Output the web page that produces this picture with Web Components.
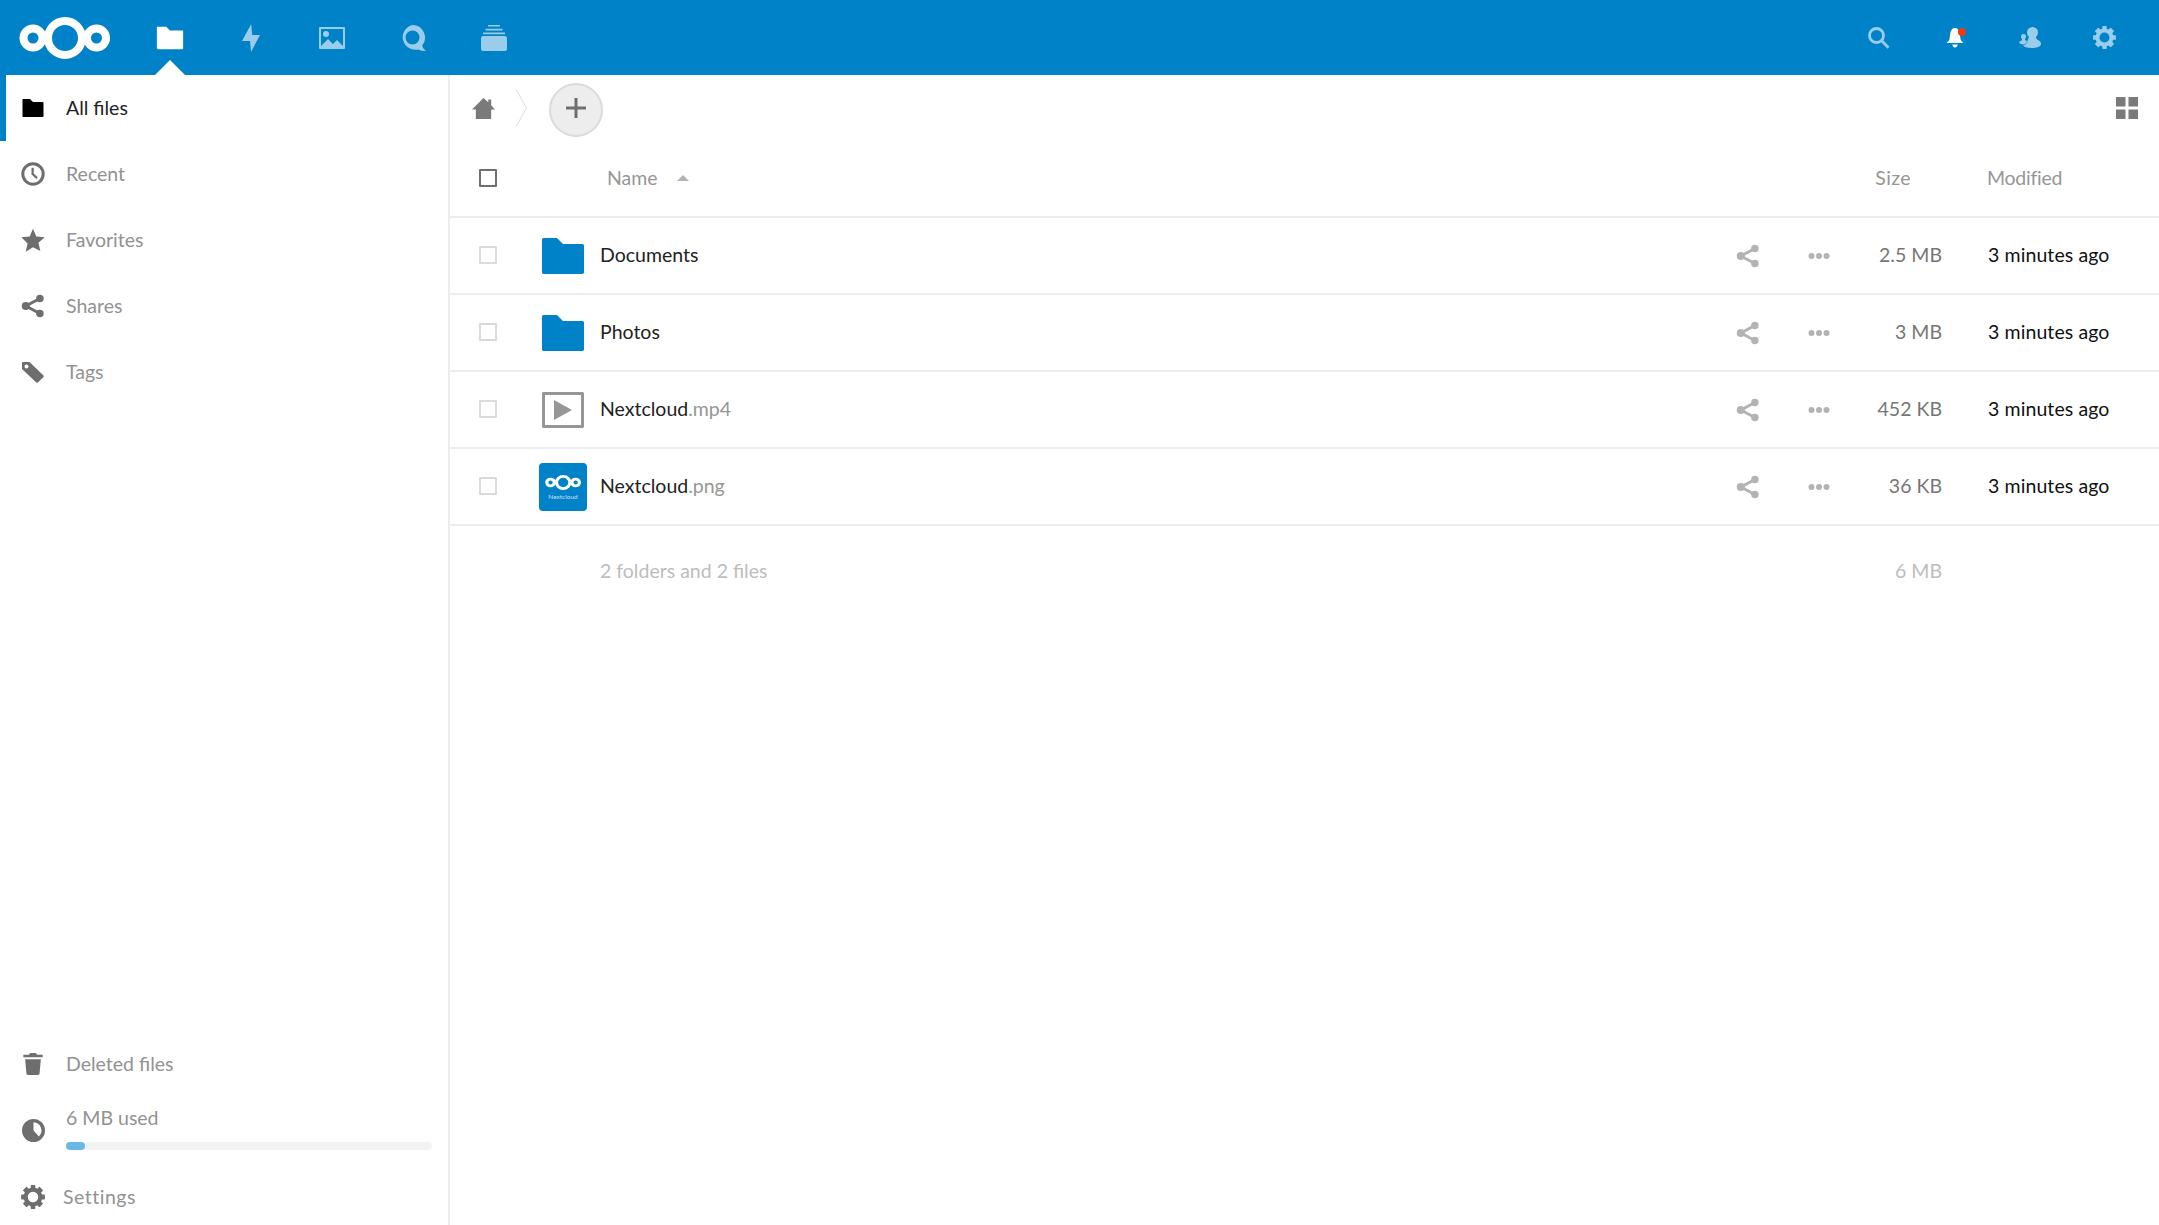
<!DOCTYPE html>
<html lang="en">
<head>
<meta charset="utf-8">
<title>Files - Nextcloud</title>
<style>
  html, body { margin: 0; height: 100%; overflow: hidden; background: #fff; }
  body { font: 19.5px/1.3 Lato, "Open Sans", sans-serif; color: #222; }
</style>
</head>
<body>
<nc-app></nc-app>

<script>
// Icons keyed by name: [viewBox, markup]. Everything paints with currentColor.
const GEAR = 'M6.94 0a.43.43 0 0 0-.44.44v1.4c-.5.16-.98.38-1.4.63L4.03 1.4a.43.43 0 0 0-.62 0L1.5 3.28a.43.43 0 0 0 0 .63l1.06 1.06c-.25.43-.46.9-.62 1.4H.5a.43.43 0 0 0-.44.44v2.38c0 .24.2.43.44.43h1.44c.16.5.37.98.62 1.41L1.5 12.1a.43.43 0 0 0 0 .62l1.9 1.88c.18.17.46.17.63 0l1.07-1.07c.42.25.9.47 1.4.63v1.4c0 .25.2.44.44.44h2.12a.43.43 0 0 0 .44-.44v-1.4c.5-.16.98-.38 1.4-.63l1.07 1.07c.17.17.45.17.62 0l1.88-1.88a.43.43 0 0 0 0-.62l-1.06-1.07c.25-.43.46-.9.62-1.4h1.47a.43.43 0 0 0 .44-.44V6.81a.43.43 0 0 0-.44-.44h-1.47a7 7 0 0 0-.62-1.4l1.06-1.06a.43.43 0 0 0 0-.63L12.6 1.4a.43.43 0 0 0-.63 0L10.9 2.47a7 7 0 0 0-1.4-.63V.44A.43.43 0 0 0 9.06 0zM8 4.5a3.5 3.5 0 1 1 0 7 3.5 3.5 0 0 1 0-7z'
const SHARE = '<circle cx="3.2" cy="8" r="2.7"/><circle cx="12.6" cy="3" r="2.5"/><circle cx="12.6" cy="13" r="2.5"/><path d="M3.2 8l9.4-5M3.2 8l9.4 5" fill="none" stroke="currentColor" stroke-width="2"/>'
const ICONS = {
  folder: ['0 0 16 16', '<path d="M1.5 2c-.25 0-.5.25-.5.5v11c0 .26.24.5.5.5h13c.26 0 .5-.24.5-.5v-9c0-.25-.25-.5-.5-.5H8L6 2z"/>'],
  bolt: ['0 0 18 28', '<path d="M9.2 0L0 17h8l1 11 9-17h-7.800z"/>'],
  image: ['0 0 26 22', '<path fill-rule="evenodd" d="M1 0h24a1 1 0 0 1 1 1v20a1 1 0 0 1-1 1H1a1 1 0 0 1-1-1V1a1 1 0 0 1 1-1zm1 2v17l7-7 5 5 4-4 6 6V2z"/><circle cx="7" cy="7" r="3"/>'],
  talk: ['0 0 26 26', '<path fill-rule="evenodd" d="M12.500 0a12.500 12.500 0 0 1 9.700 20.400c.5 2 1.700 3.800 3.800 5.600-2.700 0-5.500-.5-8-1.600A12.500 12.500 0 1 1 12.500 0zm0 5.500a7 7 0 1 0 0 14 7 7 0 0 0 0-14z"/>'],
  deck: ['0 0 26 26', '<path d="M7 0h12v1.500H7zM4.500 3.800h17v1.700h-17zM2 7.500h22V9.300H2z"/><rect y="11" width="26" height="15" rx="2"/>'],
  search: ['0 0 22 22', '<path fill="none" stroke="currentColor" stroke-width="2.800" d="M8.500 1.500a7 7 0 1 0 0 14 7 7 0 0 0 0-14zM13.500 13.500l7 7.200"/>'],
  bell: ['0 0 16 20', '<path d="M8 0C5.500 0 3.700 2 3.300 5l-.8 6C2.300 12.500 1 13.500 0 14.300V15h16v-.7c-1-.8-2.300-1.800-2.500-3.300l-.8-6C12.300 2 10.500 0 8 0zM5.200 16.500C5.600 18.500 6.700 19.500 8 19.500s2.400-1 2.800-3z"/>'],
  contacts: ['0 0 22 21', '<circle cx="13.500" cy="5.500" r="5.500"/><path d="M10 9.500h7c0 2 .5 2.800 2 3.500 1.800.8 3 2 3 4 0 3-5 4-9.500 4S5 20 4 18.500c2-.5 4.500-2 4.500-4.500 0-1.500 1.500-2.500 1.500-4.500z"/><circle cx="4.500" cy="9.500" r="2.500"/><path d="M3 11h3v2c1 .5 2 1 2 1.500 0 1.500-2 3-3.500 3S0 16.500 0 15.500c0-1 2.500-1.500 3-2.500z"/>'],
  gear: ['0 0 16 16', `<path fill-rule="evenodd" d="${GEAR}"/>`],
  clock: ['0 0 16 16', '<path fill-rule="evenodd" d="M8 .2a7.800 7.800 0 1 1 0 15.600A7.800 7.800 0 0 1 8 .2zm0 2a5.800 5.800 0 1 0 0 11.600A5.800 5.800 0 0 0 8 2.200z"/><path d="M7 3.800h1.500v3.900l2.700 2.500-1 1.100L7 8.300z"/>'],
  star: ['0 0 16 16', '<path d="M8 .5l2.200 5.100 5.600.5-4.200 3.700 1.300 5.500L8 12.900l-4.900 2.900 1.300-5.500L.2 6.100l5.600-.5z"/>'],
  share: ['0 0 16 16', SHARE],
  tag: ['0 0 22 21', '<path fill-rule="evenodd" d="M1 0h6.500l14 13.500q.7.800 0 1.500l-5.700 5.500q-.8.700-1.500 0L0 7V1q0-1 1-1zM4.500 2.500a2 2 0 1 0 0 4 2 2 0 0 0 0-4z"/>'],
  trash: ['0 0 16 16', '<path d="M6 0h4l1 1.200h4V3H1V1.200h4zM2.300 4.500h11.400l-.9 10.300c-.1.700-.5 1.200-1.200 1.200H4.400c-.7 0-1.100-.5-1.200-1.200z"/>'],
  quota: ['0 0 16 16', '<path fill-rule="evenodd" d="M8 0a8 8 0 1 1 0 16A8 8 0 0 1 8 0zm0 2.200V8l3.800 4.100A5.800 5.800 0 0 0 8 2.200z"/>'],
  home: ['0 0 24 22', '<path d="M12 0l5 4.500V1.500h3v6l4 4.500h-4v10H4V12H0z"/>'],
  grid: ['0 0 22 22', '<path d="M0 0h9.500v9.500H0zM12.500 0H22v9.500h-9.500zM0 12.500h9.500V22H0zM12.500 12.500H22V22h-9.500z"/>'],
  dots: ['0 0 22 8', '<circle cx="3.500" cy="4" r="3"/><circle cx="11" cy="4" r="3"/><circle cx="18.500" cy="4" r="3"/>'],
  plus: ['0 0 20 20', '<path d="M8.500 0h3v8.500H20v3h-8.500V20h-3v-8.500H0v-3h8.500z"/>'],
  video: ['0 0 42 36', '<path fill-rule="evenodd" d="M1.500 0h39c.8 0 1.500.7 1.500 1.500v33c0 .8-.7 1.500-1.500 1.500h-39C.7 36 0 35.300 0 34.500v-33C0 .7.700 0 1.500 0zM3 3v30h36V3z"/><path d="M12 8l18 10-18 10z"/>'],
  logo: ['0 0 91 42', '<g fill="none" stroke="currentColor" stroke-width="8"><circle cx="14" cy="21" r="9.500"/><circle cx="46" cy="21" r="17"/><circle cx="77.500" cy="21" r="9.500"/></g>']
}

customElements.define('nc-icon',
  /**
   * One inline svg icon, picked by its name attribute.
   */
  class extends HTMLElement {
    constructor () {
      super()
      this.attachShadow({ mode: 'open' })
    }

    connectedCallback () {
      const [box, body] = ICONS[this.getAttribute('name')]
      const w = this.getAttribute('w') || 24
      const h = this.getAttribute('h') || w
      this.shadowRoot.innerHTML = `
        <style>
          :host { display: inline-flex; flex: none; line-height: 0; }
          svg { display: block; fill: currentColor; }
        </style>
        <svg viewBox="${box}" width="${w}" height="${h}" preserveAspectRatio="none">${body}</svg>`
    }
  }
)

const headerTemplate = document.createElement('template')
headerTemplate.innerHTML = `
<style>
  :host { display: flex; align-items: center; height: 75px; background: #0082c9; color: #fff; flex: none; }
  .logo { display: flex; width: 129px; padding-left: 19px; box-sizing: border-box; }
  nav { display: flex; }
  .app { position: relative; display: flex; align-items: center; justify-content: center; width: 81px; height: 75px; opacity: .6; }
  .app.on { opacity: 1; }
  .app.on::after {
    content: ""; position: absolute; left: 26px; bottom: 0;
    border: 15px solid transparent; border-top: 0; border-bottom-color: #fff;
  }
  .right { display: flex; margin-left: auto; padding-right: 17px; }
  .tool { position: relative; display: flex; align-items: center; justify-content: center; width: 75px; height: 75px; opacity: .6; }
  .tool.on { opacity: 1; }
  .tool.find { margin-right: 1px; margin-left: -1px; }
  .dot { position: absolute; left: 41px; top: 28px; width: 8px; height: 8px; border-radius: 50%; background: #ec3a13; }
</style>
<div class="logo"><nc-icon name="logo" w="91" h="42"></nc-icon></div>
<nav>
  <div class="app on"><nc-icon name="folder" w="30" h="30"></nc-icon></div>
  <div class="app"><nc-icon name="bolt" w="18" h="28"></nc-icon></div>
  <div class="app"><nc-icon name="image" w="26" h="22"></nc-icon></div>
  <div class="app"><nc-icon name="talk" w="26" h="26"></nc-icon></div>
  <div class="app"><nc-icon name="deck" w="26" h="26"></nc-icon></div>
</nav>
<div class="right">
  <div class="tool find"><nc-icon name="search" w="22" h="22"></nc-icon></div>
  <div class="tool on"><nc-icon name="bell" w="16" h="20"></nc-icon><span class="dot"></span></div>
  <div class="tool"><nc-icon name="contacts" w="22" h="21"></nc-icon></div>
  <div class="tool"><nc-icon name="gear" w="23" h="23"></nc-icon></div>
</div>
`
customElements.define('nc-header',
  class extends HTMLElement {
    constructor () {
      super()
      this.attachShadow({ mode: 'open' })
        .appendChild(headerTemplate.content.cloneNode(true))
    }
  }
)

const navItemTemplate = document.createElement('template')
navItemTemplate.innerHTML = `
<style>
  :host { display: flex; align-items: center; height: 66px; color: #929292; box-sizing: border-box; }
  :host([active]) { color: #222; border-left: 6px solid #0082c9; }
  .icon { display: flex; justify-content: center; width: 66px; color: #6e6e6e; }
  :host([active]) .icon { width: 54px; margin-right: 6px; color: #000; }
  .label { padding-bottom: 1px; }
</style>
<div class="icon"><slot name="icon"></slot></div>
<div class="label"><slot></slot></div>
`
customElements.define('nc-nav-item',
  class extends HTMLElement {
    constructor () {
      super()
      this.attachShadow({ mode: 'open' })
        .appendChild(navItemTemplate.content.cloneNode(true))
    }
  }
)

const sidebarTemplate = document.createElement('template')
sidebarTemplate.innerHTML = `
<style>
  :host { display: flex; flex-direction: column; width: 450px; flex: none; box-sizing: border-box; border-right: 2px solid #ededed; }
  .spacer { flex: 1; }
  .quota { display: flex; align-items: center; height: 66px; color: #929292; }
  .quota .icon { display: flex; justify-content: center; width: 66px; color: #6e6e6e; }
  .quota .info { width: 366px; padding-bottom: 5px; }
  .bar { height: 8px; margin-top: 12px; border-radius: 4px; background: #f3f3f3; }
  .fill { width: 19px; height: 8px; border-radius: 4px; background: #6cb8e4; }
  .settings { display: flex; align-items: center; height: 62px; padding-top: 6px; box-sizing: border-box; color: #929292; letter-spacing: .5px; }
  .settings .icon { display: flex; justify-content: center; width: 63px; padding-left: 3px; color: #6e6e6e; box-sizing: border-box; }
</style>
<nc-nav-item active><nc-icon slot="icon" name="folder" w="24" h="24"></nc-icon>All files</nc-nav-item>
<nc-nav-item><nc-icon slot="icon" name="clock" w="24" h="24"></nc-icon>Recent</nc-nav-item>
<nc-nav-item><nc-icon slot="icon" name="star" w="24" h="24"></nc-icon>Favorites</nc-nav-item>
<nc-nav-item><nc-icon slot="icon" name="share" w="24" h="24"></nc-icon>Shares</nc-nav-item>
<nc-nav-item><nc-icon slot="icon" name="tag" w="22" h="21"></nc-icon>Tags</nc-nav-item>
<div class="spacer"></div>
<nc-nav-item><nc-icon slot="icon" name="trash" w="22" h="22"></nc-icon>Deleted files</nc-nav-item>
<div class="quota">
  <div class="icon"><nc-icon name="quota" w="23" h="23"></nc-icon></div>
  <div class="info">6 MB used<div class="bar"><div class="fill"></div></div></div>
</div>
<div class="settings">
  <div class="icon"><nc-icon name="gear" w="24" h="24"></nc-icon></div>
  Settings
</div>
`
customElements.define('nc-sidebar',
  class extends HTMLElement {
    constructor () {
      super()
      this.attachShadow({ mode: 'open' })
        .appendChild(sidebarTemplate.content.cloneNode(true))
    }
  }
)

const rowTemplate = document.createElement('template')
rowTemplate.innerHTML = `
<style>
  :host {
    display: grid; grid-template-columns: 76px 74px 1fr 71px 71px 88px 217px;
    align-items: center; height: 77px; padding-bottom: 2px; box-sizing: border-box; border-bottom: 2px solid #ededed;
  }
  .check { justify-self: center; width: 18px; height: 18px; box-sizing: border-box; border: 2px solid #dbdbdb; border-radius: 1px; }
  .thumb { display: flex; justify-content: center; margin-top: 2px; }
  .name { color: #222; }
  .action { display: flex; justify-content: center; margin-top: 3px; color: #b3b3b3; }
  .size { text-align: right; color: #767676; }
  .date { padding-left: 46px; color: #111; letter-spacing: .1px; }
  ::slotted([slot="ext"]) { color: #969696; }
</style>
<span class="check"></span>
<div class="thumb"><slot name="thumb"></slot></div>
<div class="name"><slot name="name"></slot><slot name="ext"></slot></div>
<div class="action"><nc-icon name="share" w="24" h="24"></nc-icon></div>
<div class="action"><nc-icon name="dots" w="22" h="8"></nc-icon></div>
<div class="size"><slot name="size"></slot></div>
<div class="date"><slot name="date"></slot></div>
`
customElements.define('nc-file-row',
  class extends HTMLElement {
    constructor () {
      super()
      this.attachShadow({ mode: 'open' })
        .appendChild(rowTemplate.content.cloneNode(true))
    }
  }
)

const previewTemplate = document.createElement('template')
previewTemplate.innerHTML = `
<style>
  :host {
    display: flex; flex-direction: column; align-items: center; width: 48px; height: 48px;
    box-sizing: border-box; padding-top: 12px; border-radius: 4px; background: #0082c9; color: #fff;
  }
  span { font-size: 6.500px; line-height: 10px; margin-top: 2px; opacity: .75; }
</style>
<nc-icon name="logo" w="36" h="15"></nc-icon>
<span>Nextcloud</span>
`
customElements.define('nc-preview',
  class extends HTMLElement {
    constructor () {
      super()
      this.attachShadow({ mode: 'open' })
        .appendChild(previewTemplate.content.cloneNode(true))
    }
  }
)

const filesTemplate = document.createElement('template')
filesTemplate.innerHTML = `
<style>
  :host { display: block; flex: 1; min-width: 0; }
  .controls { display: flex; align-items: center; height: 66px; padding: 4px 21px 0 22px; box-sizing: border-box; color: #7a7a7a; }
  .controls nc-icon:first-child, .view, .crumb { margin-top: -4px; }
  .crumb { display: flex; margin-left: 21px; margin-right: 22px; color: #dcdcdc; }
  .add { display: flex; align-items: center; justify-content: center; width: 54px; height: 54px; box-sizing: border-box; border: 2px solid #dbdbdb; border-radius: 50%; background: #ededed; color: #6f6f6f; }
  .view { margin-left: auto; }
  .head {
    display: grid; grid-template-columns: 76px 74px 1fr 71px 71px 88px 217px;
    align-items: center; height: 77px; padding-bottom: 1px; box-sizing: border-box; border-bottom: 2px solid #ededed; color: #969696;
  }
  .all { justify-self: center; width: 18px; height: 18px; box-sizing: border-box; border: 2px solid #6f6f6f; border-radius: 1px; }
  .sort { grid-column: 2 / 4; display: flex; align-items: center; padding-left: 81px; }
  .caret { width: 0; height: 0; margin-left: 19px; border: 6px solid transparent; border-top: 0; border-bottom-color: #b3b3b3; }
  .hsize { grid-column: 6; text-align: right; padding-right: 31px; letter-spacing: .4px; }
  .hdate { padding-left: 45px; letter-spacing: -.25px; }
  .summary {
    display: grid; grid-template-columns: 76px 74px 1fr 71px 71px 88px 217px;
    align-items: center; height: 89px; color: #bdbdbd;
  }
  .summary .n { grid-column: 3; }
  .summary .s { grid-column: 6; text-align: right; }
  .folder { color: #0082c9; }
  .video { color: #969696; }
</style>
<div class="controls">
  <nc-icon name="home" w="23" h="21"></nc-icon>
  <svg class="crumb" width="11" height="36" viewBox="0 0 11 36"><path d="M.5 0l10 18-10 18" fill="none" stroke="currentColor"/></svg>
  <div class="add"><nc-icon name="plus" w="20" h="20"></nc-icon></div>
  <nc-icon class="view" name="grid" w="22" h="22"></nc-icon>
</div>
<div class="head">
  <span class="all"></span>
  <div class="sort">Name<span class="caret"></span></div>
  <div class="hsize">Size</div>
  <div class="hdate">Modified</div>
</div>
<nc-file-row>
  <nc-icon slot="thumb" class="folder" name="folder" w="48" h="48"></nc-icon>
  <span slot="name">Documents</span>
  <span slot="size">2.5 MB</span><span slot="date">3 minutes ago</span>
</nc-file-row>
<nc-file-row>
  <nc-icon slot="thumb" class="folder" name="folder" w="48" h="48"></nc-icon>
  <span slot="name">Photos</span>
  <span slot="size">3 MB</span><span slot="date">3 minutes ago</span>
</nc-file-row>
<nc-file-row>
  <nc-icon slot="thumb" class="video" name="video" w="42" h="36"></nc-icon>
  <span slot="name">Nextcloud</span><span slot="ext">.mp4</span>
  <span slot="size">452 KB</span><span slot="date">3 minutes ago</span>
</nc-file-row>
<nc-file-row>
  <nc-preview slot="thumb"></nc-preview>
  <span slot="name">Nextcloud</span><span slot="ext">.png</span>
  <span slot="size">36 KB</span><span slot="date">3 minutes ago</span>
</nc-file-row>
<div class="summary">
  <div class="n">2 folders and 2 files</div>
  <div class="s">6 MB</div>
</div>
`
customElements.define('nc-files',
  class extends HTMLElement {
    constructor () {
      super()
      this.attachShadow({ mode: 'open' })
        .appendChild(filesTemplate.content.cloneNode(true))
    }
  }
)

const appTemplate = document.createElement('template')
appTemplate.innerHTML = `
<style>
  :host { display: flex; flex-direction: column; height: 100vh; }
  .body { display: flex; flex: 1; min-height: 0; }
</style>
<nc-header></nc-header>
<div class="body">
  <nc-sidebar></nc-sidebar>
  <nc-files></nc-files>
</div>
`
customElements.define('nc-app',
  class extends HTMLElement {
    constructor () {
      super()
      this.attachShadow({ mode: 'open' })
        .appendChild(appTemplate.content.cloneNode(true))
    }
  }
)
</script>
</body>
</html>
